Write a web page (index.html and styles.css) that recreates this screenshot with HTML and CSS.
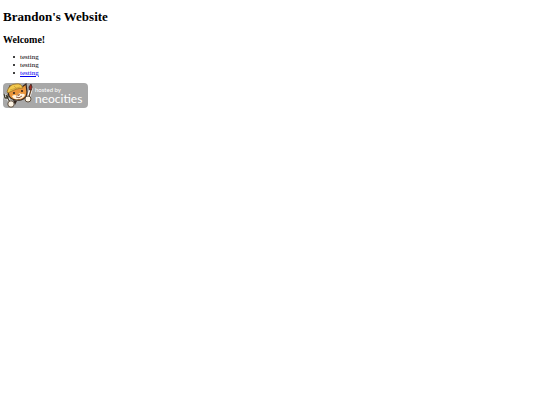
FILE: index.html
```html
<!DOCTYPE html>
<html lang="en">
<head>
  <meta charset="UTF-8">
  <title>Brandon's Website</title>
  <link rel="stylesheet" href="styles.css">
</head>
<body>
  <h1>Brandon's Website</h1>
  <h2>Welcome!</h2>
  <ul>
    <li>testing</li>
    <li>testing</li>
    <li><a href="#">testing</a></li>
  </ul>
  <a class="badge" href="https://neocities.org">
    <svg class="cat" viewBox="0 0 32 25" aria-hidden="true">
      <!-- paintbrush -->
      <path d="M25 16 L28 6" stroke="#fff" stroke-width="3.4" stroke-linecap="round"/>
      <path d="M25 17 L28 7" stroke="#6b4525" stroke-width="1.3"/>
      <path d="M26.5 7 L26 4 L28 1 L29 4 L28.5 7 Z" fill="#a32a20" stroke="#3b2320" stroke-width=".8"/>
      <!-- fork -->
      <path d="M1 11 L2 15 L5 15 L5 11 M3 12 L8 21" fill="none" stroke="#fff" stroke-width="2.6"/>
      <path d="M1 11 L2 15 L5 15 L5 11 M3 12 L8 21" fill="none" stroke="#3d3829" stroke-width="1.3"/>
      <!-- head -->
      <path d="M5 8 L7 3 L11 4 Q15 0 19 4 L23 1 L24 9 Q24 15 18 17 Q9 18 6 13 Z" fill="#e9953c" stroke="#33251d" stroke-width="1.2"/>
      <path d="M9 13 Q12 11 14 13 Q16 9 18 11 Q21 10 22 12 Q20 16 15 16 Q11 17 9 13 Z" fill="#fff3df"/>
      <path d="M4 9 Q6 1 13 1 Q18 0 20 5 Q14 5 5 10 Z" fill="#f2c94e" stroke="#987029" stroke-width=".8"/>
      <path d="M7 7 L17 4 M11 3 L14 6" stroke="#b78b30" stroke-width=".6"/>
      <circle cx="11" cy="10" r="1.1" fill="#33251d"/>
      <circle cx="19" cy="8" r="1.1" fill="#33251d"/>
      <path d="M14 12 L17 11 L16 13 Z" fill="#75402c"/>
      <path d="M13 14 Q16 16 19 13" fill="none" stroke="#75402c" stroke-width=".8"/>
      <!-- paws -->
      <path d="M10 17 L14 18 L12 22 Z" fill="#33251d"/>
      <circle cx="8" cy="21" r="3.2" fill="#fff5e5" stroke="#4f402f" stroke-width=".9"/>
      <circle cx="25" cy="16" r="3" fill="#fff5e5" stroke="#4f402f" stroke-width=".9"/>
    </svg>
    <span class="label">
      <span class="hosted">hosted by</span>
      <span class="name">neocities</span>
    </span>
  </a>
</body>
</html>
```

FILE: styles.css
```css
body {
  margin: 9px 3px;
  font-family: "Liberation Serif", "Times New Roman", serif;
  font-size: 7px;
  line-height: 8px;
  color: #000;
  background: #fff;
}

h1 {
  margin: 0 0 10px;
  font-size: 13px;
  line-height: 15px;
}

h2 {
  margin: 0 0 8px;
  font-size: 10px;
  line-height: 11px;
}

ul {
  margin: 0 0 6px;
  padding-left: 10px;
  list-style: none;
}

li {
  display: flex;
  align-items: center;
  gap: 5px;
}

li::before {
  content: "";
  width: 2px;
  height: 2px;
  border-radius: 1px;
  background: #000;
}

a {
  color: #00e;
}

.badge {
  display: inline-flex;
  width: 85px;
  height: 25px;
  border-radius: 4px;
  background: #a8a8a8;
  color: #fff;
  text-decoration: none;
  overflow: hidden;
}

.cat {
  flex: none;
  width: 32px;
  height: 25px;
}

.label {
  display: flex;
  flex-direction: column;
  padding-top: 4px;
  font-family: Lato, sans-serif;
}

.hosted {
  font-size: 6px;
  line-height: 6px;
}

.name {
  font-size: 12px;
  line-height: 12px;
}
```
